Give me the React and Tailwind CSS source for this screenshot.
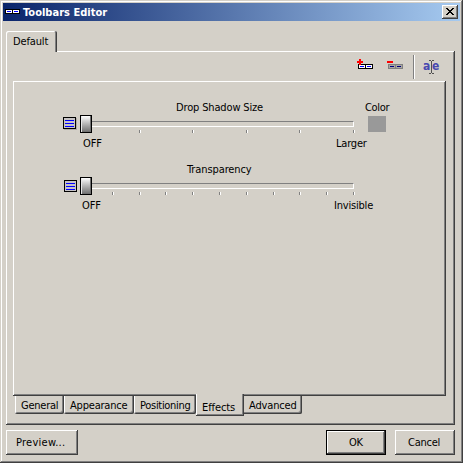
import React from 'react';
import clsx from 'clsx';

const raised = 'shadow-[inset_-1px_-1px_#404040,inset_1px_1px_#fff,inset_-2px_-2px_#808080]';

function Label({ className, children }) {
  return <span className={clsx('block h-[14px] shrink-0 whitespace-nowrap text-left leading-[16px]', className)}>{children}</span>;
}

function LinkedBoxes({ stroke, fill, dash }) {
  return (
    <g>
      <path fill={stroke} d="M0 0h15v5H0z" />
      <path fill={fill} d="M1 1h6v3H1zM8 1h6v3H8z" />
      <path fill={dash} d="M2 2h4v1H2zM9 2h4v1H9z" />
    </g>
  );
}

function TitleBar() {
  return (
    <div className="flex h-[18px] w-[457px] shrink-0 items-start bg-[linear-gradient(to_right,#0a246a,#a6caf0)] pl-[2px] pr-[2px] pt-[2px] text-white">
      <svg className="mt-[4px] mr-[3px] h-[5px] w-[15px] shrink-0" viewBox="0 0 15 5" shapeRendering="crispEdges">
        <LinkedBoxes stroke="#000" fill="#fff" dash="#0000ff" />
      </svg>
      <Label className="font-bold tracking-[0.02px]">Toolbars Editor</Label>
      <button className={clsx('ml-auto flex h-[14px] w-[16px] bg-[#d4d0c8] pl-[4px] pt-[3px]', raised)}>
        <svg className="h-[7px] w-[8px]" viewBox="0 0 8 7" shapeRendering="crispEdges">
          <path fill="#000" d="M0 0h2v1H0zM6 0h2v1H6zM1 1h2v1H1zM5 1h2v1H5zM2 2h4v1H2zM3 3h2v1H3zM2 4h4v1H2zM1 5h2v1H1zM5 5h2v1H5zM0 6h2v1H0zM6 6h2v1H6z" />
        </svg>
      </button>
    </div>
  );
}

function Toolbar() {
  return (
    <div className="flex h-[29px] items-start justify-end pr-[15px] pt-[3px]">
      <svg className="mt-[4px] h-[11px] w-[16px]" viewBox="0 0 16 11" shapeRendering="crispEdges">
        <g transform="translate(1 5)"><LinkedBoxes stroke="#000" fill="#fff" dash="#0000ff" /></g>
        <path fill="#ff0000" d="M2 0h2v6H2zM0 2h6v2H0z" />
      </svg>
      <svg className="ml-[14px] mt-[4px] h-[11px] w-[16px]" viewBox="0 0 16 11" shapeRendering="crispEdges">
        <g transform="translate(1 5)"><LinkedBoxes stroke="#808080" fill="#a8a6a2" dash="#000080" /></g>
        <path fill="#ff0000" d="M0 2h6v2H0z" />
      </svg>
      <div className="ml-[10px] h-[24px] w-[2px] border-l border-r border-l-[#808080] border-r-white" />
      <div className="relative ml-[9px] mt-[3px] h-[18px] w-[16px] text-[12px] font-bold leading-[18px] text-[#4848b0]">
        <span className="absolute -left-px -top-px">a</span>
        <span className="absolute left-[8px] -top-px">e</span>
        <svg className="absolute left-[5px] top-[2px] h-[14px] w-[5px]" viewBox="0 0 5 14" shapeRendering="crispEdges">
          <path fill="#505050" d="M0 0h2v1H0zM3 0h2v1H3zM2 1h1v12H2zM0 13h2v1H0zM3 13h2v1H3z" />
        </svg>
      </div>
    </div>
  );
}

function LinesIcon({ className }) {
  return (
    <div className={clsx('flex h-[12px] w-[13px] shrink-0 flex-col gap-[2px] border border-black bg-[#c6c3c6] px-px pt-[2px]', className)}>
      <div className="h-px bg-[#0000ff]" />
      <div className="h-px bg-[#0000ff]" />
      <div className="h-px bg-[#0000ff]" />
    </div>
  );
}

function Slider({ ticks }) {
  return (
    <div className="flex h-[20px] w-[275px] shrink-0 pt-px">
      <div className="h-[18px] w-[12px] shrink-0 border border-black bg-linear-to-b from-white to-[#707070] shadow-[inset_1px_0_#e8e8e8,inset_-1px_-1px_#707070]" />
      <div className="w-[262px] shrink-0 pt-[6px]">
        <div className="h-[6px] border-b border-r border-t border-b-white border-r-white border-t-[#808080]" />
        <svg className="mt-[3px] h-[3px] w-[263px]" viewBox="0 0 263 3" shapeRendering="crispEdges">
          {ticks.map((x) => (
            <g key={x}>
              <path fill="#808080" d={`M${x} 0h1v3h-1z`} />
              <path fill="#fff" d={`M${x + 1} 0h1v3h-1z`} />
            </g>
          ))}
        </svg>
      </div>
    </div>
  );
}

function EffectsPage() {
  return (
    <div className={clsx('ml-[7px] h-[315px] w-[433px] pt-[19px]', raised)}>
      <div className="flex h-[14px]">
        <Label className="ml-[163px] w-[189px] tracking-[-0.15px]">Drop Shadow Size</Label>
        <Label className="tracking-[-0.3px]">Color</Label>
      </div>
      <div className="flex h-[22px] pl-[50px]">
        <LinesIcon className="mr-[4px] mt-[3px] shadow-[1px_1px_#b0aca6]" />
        <Slider ticks={[47, 100, 154, 207, 261]} />
        <div className="ml-[13px] mt-[2px] h-[16px] w-[18px] bg-[#999]" />
      </div>
      <div className="flex h-[26px]">
        <Label className="ml-[70px] w-[253px] tracking-[-0.1px]">OFF</Label>
        <Label className="tracking-[-0.2px]">Larger</Label>
      </div>
      <Label className="ml-[174px] tracking-[-0.1px]">Transparency</Label>
      <div className="flex h-[22px] pl-[51px]">
        <LinesIcon className="mr-[3px] mt-[4px]" />
        <Slider ticks={[20, 47, 73, 100, 127, 154, 181, 207, 234, 261]} />
      </div>
      <div className="flex h-[14px]">
        <Label className="ml-[69px] w-[252px] tracking-[-0.1px]">OFF</Label>
        <Label className="tracking-[-0.2px]">Invisible</Label>
      </div>
    </div>
  );
}

const lowTab = 'h-[18px] shrink-0 rounded-b-[2px] pt-[2px] shadow-[inset_-1px_-1px_#404040,inset_1px_0_#fff,inset_-2px_-2px_#808080]';

function BottomTabs() {
  return (
    <div className="flex items-start pl-[9px]">
      <div className={clsx('w-[49px] pl-[6px]', lowTab)}><Label className="tracking-[-0.25px]">General</Label></div>
      <div className={clsx('w-[70px] pl-[6px]', lowTab)}><Label className="tracking-[-0.2px]">Appearance</Label></div>
      <div className={clsx('w-[62px] pl-[6px]', lowTab)}><Label className="tracking-[-0.3px]">Positioning</Label></div>
      <div className="relative -mt-[2px] h-[22px] w-[48px] shrink-0 bg-[#d4d0c8] pl-[6px] pt-[6px] shadow-[inset_-1px_-1px_#404040,inset_1px_0_#fff,inset_-2px_-2px_#808080]">
        <Label className="tracking-[-0.1px]">Effects</Label>
      </div>
      <div className="h-[18px] w-[58px] shrink-0 rounded-br-[2px] pl-[5px] pt-[2px] shadow-[inset_-1px_-1px_#404040,inset_-2px_-2px_#808080]">
        <Label className="tracking-[-0.15px]">Advanced</Label>
      </div>
    </div>
  );
}

export default function App() {
  return (
    <div className="flex h-[463px] w-[463px] flex-col overflow-hidden bg-[#d4d0c8] p-[3px] font-['DejaVu_Sans_Condensed','DejaVu_Sans',sans-serif] text-[11px] text-black [font-stretch:condensed] shadow-[inset_-1px_-1px_#404040,inset_1px_1px_#d4d0c8,inset_-2px_-2px_#808080,inset_2px_2px_#fff]">
      <TitleBar />
      <div className="relative ml-[3px] mt-[10px] -mb-px h-[21px] w-[51px] shrink-0 rounded-t-[2px] bg-[#d4d0c8] pl-[7px] pt-[3px] shadow-[inset_-1px_0_#404040,inset_1px_1px_#fff,inset_-2px_0_#808080]">
        <Label className="tracking-[-0.15px]">Default</Label>
      </div>
      <div className={clsx('ml-[3px] h-[374px] w-[449px] shrink-0 pt-px', raised)}>
        <Toolbar />
        <EffectsPage />
        <BottomTabs />
      </div>
      <div className="ml-[3px] mt-[5px] flex h-[25px] w-[449px] shrink-0">
        <button className={clsx('flex w-[72px] pl-[10px] pt-[5px]', raised)}><Label className="tracking-[0.25px]">Preview...</Label></button>
        <button className={clsx('ml-auto flex w-[60px] border border-black pl-[22px] pt-[4px]', raised)}><Label className="tracking-[-0.4px]">OK</Label></button>
        <button className={clsx('ml-[9px] flex w-[60px] pl-[13px] pt-[5px]', raised)}><Label className="tracking-[-0.25px]">Cancel</Label></button>
      </div>
    </div>
  );
}
